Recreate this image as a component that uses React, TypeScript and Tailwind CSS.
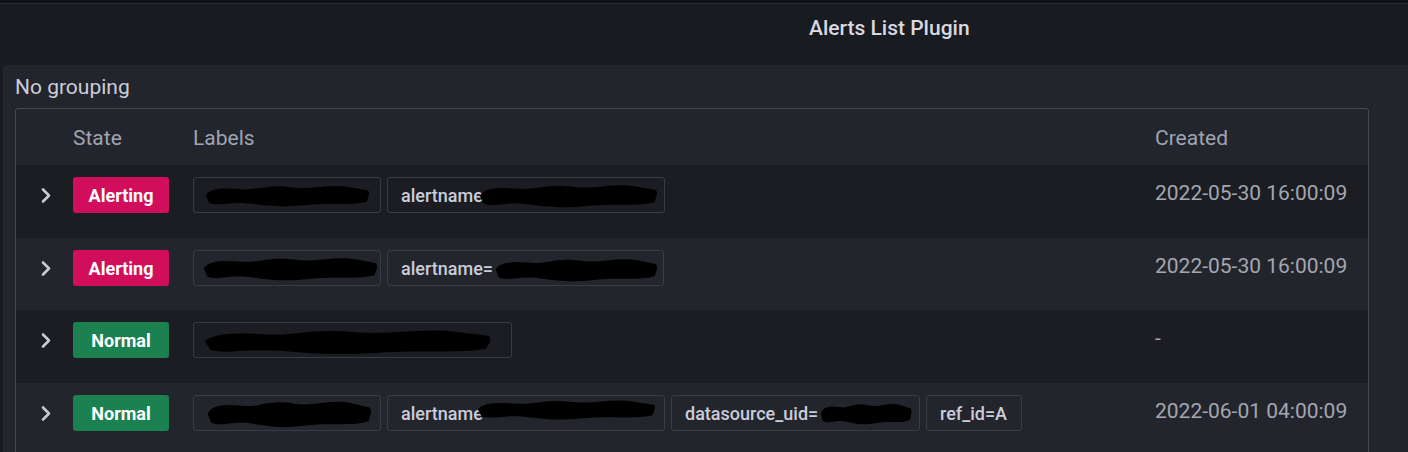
import React from 'react'

type Chip = {
  width: number
  text?: string
  // redaction blob drawn over the chip
  blot?: { left: number; width: number; top?: number; height?: number }
}

type AlertRow = {
  state: 'Alerting' | 'Normal'
  created: string
  chips: Chip[]
}

const ROWS: AlertRow[] = [
  {
    state: 'Alerting',
    created: '2022-05-30 16:00:09',
    chips: [
      { width: 188, blot: { left: 10, width: 166, top: 4, height: 26 } },
      { width: 278, text: 'alertname=', blot: { left: 90, width: 180, top: 3, height: 28 } },
    ],
  },
  {
    state: 'Alerting',
    created: '2022-05-30 16:00:09',
    chips: [
      { width: 188, blot: { left: 8, width: 176, top: 3, height: 28 } },
      { width: 277, text: 'alertname=', blot: { left: 106, width: 164, top: 4, height: 28 } },
    ],
  },
  {
    state: 'Normal',
    created: '-',
    chips: [{ width: 319, blot: { left: 8, width: 290, top: 3, height: 30 } }],
  },
  {
    state: 'Normal',
    created: '2022-06-01 04:00:09',
    chips: [
      { width: 188, blot: { left: 12, width: 166, top: 1, height: 32 } },
      { width: 278, text: 'alertname=', blot: { left: 88, width: 180, top: 1, height: 24 } },
      { width: 249, text: 'datasource_uid=', blot: { left: 148, width: 92, top: 4, height: 26 } },
      { width: 96, text: 'ref_id=A' },
    ],
  },
]

function Blot({ width, height }: { width: number; height: number }) {
  return (
    <svg width={width} height={height} viewBox="0 0 200 50" preserveAspectRatio="none">
      <path
        d="M2 26 C8 10 28 12 46 14 S78 4 104 10 S150 2 176 10 S198 14 199 24 L196 38 C178 46 150 40 124 44 S86 48 58 42 S18 48 6 40 Z"
        fill="#000"
      />
    </svg>
  )
}

function Chevron() {
  return (
    <svg width="12" height="17" viewBox="0 0 12 17" fill="none">
      <path d="M3 2.5 L9 8.5 L3 14.5" stroke="#c7c9d3" strokeWidth="2.6" strokeLinecap="round" strokeLinejoin="round" />
    </svg>
  )
}

function LabelChip({ chip }: { chip: Chip }) {
  return (
    <div
      className="relative h-9 flex items-center px-[13px] border border-[#393c44] rounded-[3px] text-[18px] font-medium text-[#ccccdc] shrink-0"
      style={{ width: chip.width }}
    >
      {chip.text && <span>{chip.text}</span>}
      {chip.blot && (
        <div className="absolute" style={{ left: chip.blot.left, top: chip.blot.top ?? 4 }}>
          <Blot width={chip.blot.width} height={chip.blot.height ?? 26} />
        </div>
      )}
    </div>
  )
}

function StateBadge({ state }: { state: AlertRow['state'] }) {
  const cls =
    state === 'Alerting'
      ? 'bg-[#d10e5c]'
      : 'bg-[#1b8150]'
  return (
    <div className={`${cls} w-[96px] h-9 rounded-[3px] flex items-center justify-center text-white text-[18px] font-bold`}>
      {state}
    </div>
  )
}

export default function App() {
  return (
    <div className="w-[1408px] h-[452px] overflow-hidden bg-[#181b1f] font-['Roboto',sans-serif]">
      <div className="h-[4px] bg-[#111217] border-b border-[#26292e]" />

      {/* Panel header */}
      <div className="h-[61px] pt-[12px]">
        <div className="ml-[809px] text-[21px] leading-[25px] font-medium text-[#d8d9e0]">Alerts List Plugin</div>
      </div>

      {/* Panel body */}
      <div className="ml-[3px] h-[400px] bg-[#22252b] rounded-tl-[4px] px-[12px] pt-[10px]">
        <div className="text-[21px] leading-[25px] text-[#ccccdc]">No grouping</div>

        <div className="mt-[8px] w-[1354px] border border-[#44474f] rounded-[3px]">
          {/* Header */}
          <div className="h-[56px] pt-[3px] flex items-center text-[21px] text-[#9fa4b3]">
            <div className="w-[57px]" />
            <div className="w-[120px]">State</div>
            <div className="w-[962px]">Labels</div>
            <div>Created</div>
          </div>

          {ROWS.map((row, i) => (
            <div
              key={i}
              className={`${i % 2 === 0 ? 'bg-[#1b1d22]' : 'bg-[#22252b]'} ${i % 2 === 0 ? 'h-[73px]' : 'h-[72px]'} flex items-start pt-[12px]`}
            >
              <div className="w-[57px] h-9 flex items-center pl-[24px]">
                <Chevron />
              </div>
              <div className="w-[120px]">
                <StateBadge state={row.state} />
              </div>
              <div className="w-[962px] flex gap-[6px]">
                {row.chips.map((c, j) => (
                  <LabelChip key={j} chip={c} />
                ))}
              </div>
              <div className="text-[21px] leading-[31px] pt-[1px] text-[#a3a7b1]">{row.created}</div>
            </div>
          ))}
        </div>
      </div>
    </div>
  )
}
